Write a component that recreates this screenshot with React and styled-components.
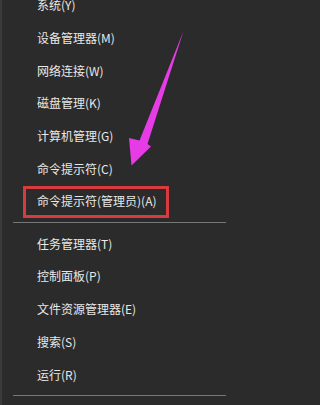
import React from 'react'
import styled, { createGlobalStyle } from 'styled-components'

const GlobalStyle = createGlobalStyle`
  html, body {
    margin: 0;
    padding: 0;
    background: #2b2b2b;
    overflow: hidden;
  }
`;

const groups = [
    [
        { label: '系统(Y)' },
        { label: '设备管理器(M)' },
        { label: '网络连接(W)' },
        { label: '磁盘管理(K)' },
        { label: '计算机管理(G)' },
        { label: '命令提示符(C)' },
        { label: '命令提示符(管理员)(A)', marked: true },
    ],
    [
        { label: '任务管理器(T)' },
        { label: '控制面板(P)' },
        { label: '文件资源管理器(E)' },
        { label: '搜索(S)' },
        { label: '运行(R)' },
    ],
];

export default function App() {
    return (
        <>
            <GlobalStyle />
            <Menu>
                <List>
                    {groups.map((items, i) => (
                        <React.Fragment key={i}>
                            {items.map((item) => (
                                <Item key={item.label}>
                                    <span>{item.label}</span>
                                    {item.marked && <Highlight />}
                                </Item>
                            ))}
                            <Separator />
                        </React.Fragment>
                    ))}
                </List>
                <Arrow viewBox="0 0 227 405" width="227" height="405">
                    <polygon
                        points="183.5,31 147.5,144 151,146.5 131.5,165.5 129,138 139.5,140.5"
                        fill="#e63ce6"
                    />
                </Arrow>
            </Menu>
        </>
    )
}

const Menu = styled.div`
    position: relative;
    width: 227px;
    height: 405px;
    overflow: hidden;
    background: #2b2b2b;
    box-sizing: border-box;
    border-left: 2px solid #3a3a3a;
`;

const List = styled.ul`
    list-style: none;
    margin: -11px 0 0;
    padding: 0;
`;

const Item = styled.li`
    position: relative;
    display: flex;
    align-items: center;
    height: 32.7px;
    padding-left: 35px;
    color: #e8e8e8;
    font-family: "Noto Sans CJK SC", "Noto Sans", sans-serif;
    font-size: 12px;
    line-height: 1;
    white-space: nowrap;
`;

const Highlight = styled.span`
    position: absolute;
    left: 21px;
    top: 1px;
    width: 146px;
    height: 32px;
    box-sizing: border-box;
    border: 3px solid #d93a3e;
`;

const Separator = styled.li`
    height: 1px;
    margin: 4px 1px 4.6px 11px;
    background: #777777;
`;

const Arrow = styled.svg`
    position: absolute;
    left: -2px;
    top: 0;
    pointer-events: none;
`;
